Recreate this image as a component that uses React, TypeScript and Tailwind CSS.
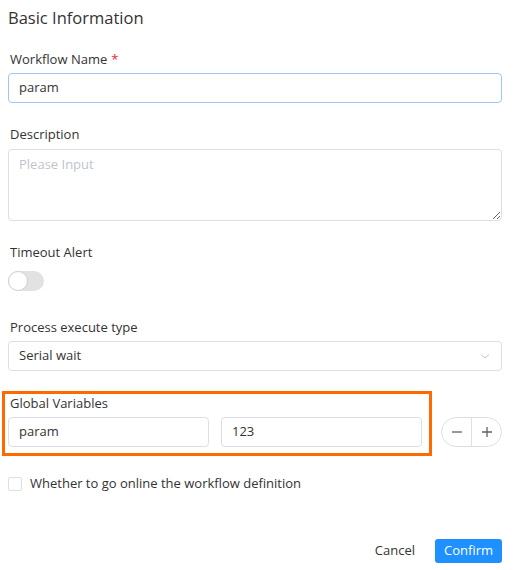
import React from "react";

export default function App() {
  return (
    <div
      className="w-[514px] h-[570px] bg-white pl-2 pr-3 text-[#333] overflow-hidden"
      style={{ fontFamily: '"Open Sans", "Noto Sans", Arial, sans-serif' }}
    >
      <div className="h-[36px] flex items-center text-[16.5px] text-[#333]">Basic Information</div>

      <div className="mt-[14px] h-5 flex items-center pl-[2px] text-[13px] text-[#333]">
        Workflow Name<span className="text-[#f5222d] ml-1">*</span>
      </div>
      <div className="mt-[3px] h-[30px] rounded-[4px] border border-[#9cc7f2] flex items-center px-[10px] text-[13px] text-[#333]">
        param
      </div>

      <div className="mt-[22px] h-5 flex items-center pl-[2px] text-[13px]">Description</div>
      <textarea
        className="mt-[4px] block w-full h-[72px] rounded-[4px] border border-[#dcdfe6] px-[10px] py-[5px] text-[13px] placeholder:text-[#c0c4cc] outline-none"
        placeholder="Please Input"
        style={{ fontFamily: '"Open Sans", "Noto Sans", Arial, sans-serif' }}
      />

      <div className="mt-[22px] h-5 flex items-center pl-[2px] text-[13px]">Timeout Alert</div>
      <div className="mt-[8px] w-9 h-5 rounded-full bg-[#e2e2e2] relative">
        <div className="absolute left-0 top-0 w-5 h-5 rounded-full bg-white border border-[#d0d0d0]" />
      </div>

      <div className="mt-[27px] h-5 flex items-center pl-[2px] text-[13px]">Process execute type</div>
      <div className="mt-[3px] h-[30px] rounded-[4px] border border-[#dcdfe6] flex items-center justify-between px-[10px] text-[13px]">
        <span>Serial wait</span>
        <svg width="12" height="12" viewBox="0 0 12 12" fill="none" stroke="#c0c4cc" strokeWidth="1">
          <path d="M2 4.5 L6 8 L10 4.5" />
        </svg>
      </div>

      <div className="relative mt-[23px]">
        <div className="absolute left-[-6px] top-[-3px] w-[430px] h-[65px] border-[3px] border-[#ff6a00] pointer-events-none" />
        <div className="h-5 flex items-center pl-[2px] text-[13px]">Global Variables</div>
        <div className="mt-[3px] flex items-center">
          <div className="flex-1 h-[30px] rounded-[4px] border border-[#dcdfe6] flex items-center px-[10px] text-[13px]">param</div>
          <div className="ml-3 flex-1 h-[30px] rounded-[4px] border border-[#dcdfe6] flex items-center px-[10px] text-[13px]">123</div>
          <div className="ml-[19px] w-[61px] h-[30px] rounded-full border border-[#dcdfe6] flex">
            <div className="flex-1 flex items-center justify-center border-r border-[#dcdfe6]">
              <svg width="14" height="14" viewBox="0 0 14 14" stroke="#606266" strokeWidth="1.3">
                <path d="M2 7 H12" />
              </svg>
            </div>
            <div className="flex-1 flex items-center justify-center">
              <svg width="14" height="14" viewBox="0 0 14 14" stroke="#606266" strokeWidth="1.3">
                <path d="M2 7 H12 M7 2 V12" />
              </svg>
            </div>
          </div>
        </div>
      </div>

      <div className="mt-[27px] flex items-center text-[13px]">
        <div className="w-[14px] h-[14px] rounded-[2px] border border-[#dcdfe6] bg-white" />
        <span className="ml-2">Whether to go online the workflow definition</span>
      </div>

      <div className="mt-[45px] flex justify-end items-center">
        <span className="text-[13px] text-[#333] mr-5">Cancel</span>
        <div className="h-6 px-[9px] rounded-[3px] bg-[#1e90ff] text-white text-[13px] flex items-center">Confirm</div>
      </div>
    </div>
  );
}
